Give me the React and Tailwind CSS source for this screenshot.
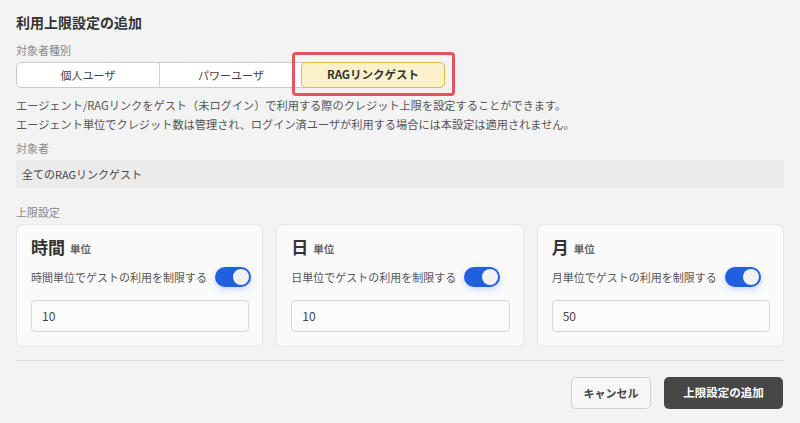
import React from 'react';

const font = { fontFamily: '"Noto Sans CJK JP", "Noto Sans", sans-serif' };

const Toggle = () => (
  <span className="relative inline-flex h-[20px] w-[36px] shrink-0 items-center rounded-full bg-[#1f5fe0] shadow-[0_2px_6px_rgba(31,95,224,0.25)]">
    <span className="absolute right-[2px] h-[16px] w-[16px] rounded-full bg-[#f1f1f1]" />
  </span>
);

const LimitCard = ({ unit, label, value }) => (
  <div className="rounded-[6px] border border-[#e6e6e6] bg-[#fafafa] pt-[10px] pb-[14px] pl-[14px] pr-[13px]">
    <div className="flex h-[24px] items-end gap-[5px] leading-[24px]">
      <span className="text-[17px] font-bold text-[#333]">{unit}</span>
      <span className="pb-[1px] text-[10.5px] font-bold leading-[18px] text-[#666]">単位</span>
    </div>
    <div className="mt-[8px] flex h-[20px] items-center gap-[8px]">
      <span className="whitespace-nowrap text-[11px] text-[#555]">{label}</span>
      <Toggle />
    </div>
    <div className="mt-[13px] flex h-[32px] items-center rounded-[4px] border border-[#d6d6d6] bg-[#fbfbfb] pl-[10px] text-[12px] text-[#444]">
      {value}
    </div>
  </div>
);

const App = () => {
  const segments = ['個人ユーザ', 'パワーユーザ', 'RAGリンクゲスト'];

  return (
    <div className="h-[423px] w-[800px] overflow-hidden bg-[#f3f3f3] px-[16px] pt-[12px]" style={font}>
      <h1 className="h-[20px] text-[14px] font-bold leading-[20px] text-[#333]">利用上限設定の追加</h1>

      <div className="mt-[10px] text-[11px] leading-[16px] text-[#888]">対象者種別</div>
      <div className="mt-[4px] flex h-[26px] w-[429px] rounded-[5px] border border-[#c9c9c9] bg-white">
        {segments.map((s, i) =>
          i === 2 ? (
            <div key={s} className="relative flex-1">
              <div className="absolute -top-[1px] -bottom-[1px] -left-[1px] -right-[1px] flex items-center justify-center rounded-[5px] border border-[#e3bb45] bg-[#fbf1cb] text-[11.5px] font-bold text-[#333]">
                {s}
              </div>
              <div className="pointer-events-none absolute -top-[11px] -bottom-[9px] -left-[10px] -right-[11px] rounded-[4px] border-[3px] border-[#e8545a]" />
            </div>
          ) : (
            <div
              key={s}
              className={`flex flex-1 items-center justify-center text-[11px] text-[#444] ${i === 0 ? 'border-r border-[#d0d0d0]' : ''}`}
            >
              {s}
            </div>
          )
        )}
      </div>

      <p className="mt-[8px] text-[11.2px] leading-[19px] text-[#555]">
        エージェント/RAGリンクをゲスト（未ログイン）で利用する際のクレジット上限を設定することができます。
        <br />
        エージェント単位でクレジット数は管理され、ログイン済ユーザが利用する場合には本設定は適用されません。
      </p>

      <div className="mt-[6px] text-[11px] leading-[16px] text-[#888]">対象者</div>
      <div className="mt-[4px] flex h-[28px] items-center rounded-[3px] bg-[#ebebeb] pl-[6px] text-[11px] text-[#444]">
        全てのRAGリンクゲスト
      </div>

      <div className="mt-[16px] text-[11px] leading-[16px] text-[#888]">上限設定</div>
      <div className="mt-[4px] grid grid-cols-3 gap-[13px]">
        <LimitCard unit="時間" label="時間単位でゲストの利用を制限する" value="10" />
        <LimitCard unit="日" label="日単位でゲストの利用を制限する" value="10" />
        <LimitCard unit="月" label="月単位でゲストの利用を制限する" value="50" />
      </div>

      <div className="mt-[13px] h-px bg-[#dcdcdc]" />

      <div className="mt-[16px] flex justify-end gap-[13px] pr-[1px]">
        <button className="h-[32px] w-[80px] rounded-[5px] border border-[#d0d0d0] bg-[#f7f7f7] text-[11px] font-bold text-[#444]">
          キャンセル
        </button>
        <button className="h-[32px] w-[119px] rounded-[5px] bg-[#474747] text-[11.5px] font-bold text-white">
          上限設定の追加
        </button>
      </div>
    </div>
  );
};

export default App;
